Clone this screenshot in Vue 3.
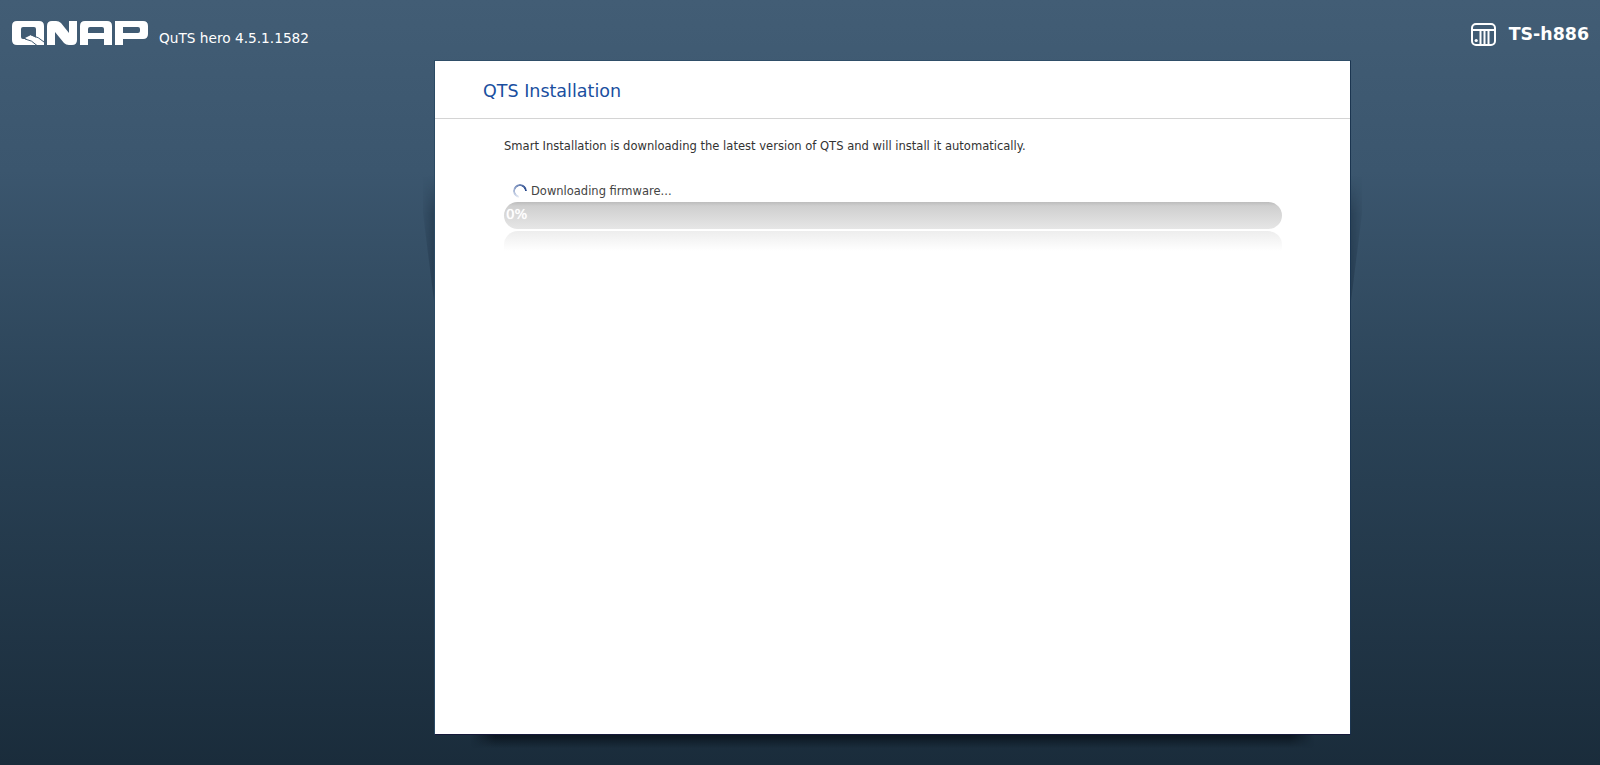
<script setup>
const title = 'QTS Installation'
</script>

<template>
  <div class="page">
    <header class="top">
      <div class="brand">
        <svg class="logo" viewBox="0 0 136 25" width="136" height="25">
          <path fill="#fff" fill-rule="evenodd" d="M5 0H27Q32 0 32 5V19Q32 24 27 24H5Q0 24 0 19V5Q0 0 5 0ZM11 6Q9 6 9 8V16Q9 18 11 18H24V8Q24 6 22 6Z"/>
          <path fill="#fff" d="M13 17L19 14L32 21V24H25Z"/>
          <path fill="none" stroke="#425c73" stroke-width="1" d="M19 14Q27 16 32 21M13 18Q20 19 25 24.5"/>
          <path fill="#fff" d="M35 24V5Q35 0 40 0H44Q47 0 49 2L57 12V0H65V19Q65 24 60 24H57Q54 24 52 22L43 11V24Z"/>
          <path fill="#fff" fill-rule="evenodd" d="M68 24V5Q68 0 73 0H95Q100 0 100 5V24H92V18H76V24ZM76 12H92V8Q92 6 90 6H78Q76 6 76 8Z"/>
          <path fill="#fff" fill-rule="evenodd" d="M103 24V0H131Q136 0 136 5V13Q136 18 131 18H111V24ZM111 12H126Q128 12 128 10V8Q128 6 126 6H111Z"/>
        </svg>
        <span class="version">QuTS hero 4.5.1.1582</span>
      </div>
      <div class="model">
        <svg class="nas" viewBox="0 0 25 23" width="25" height="23">
          <rect x="1" y="1" width="23" height="21" rx="4" fill="none" stroke="#fff" stroke-width="2"/>
          <path d="M1.5 7H23.5" stroke="#fff" stroke-width="2"/>
          <path d="M9.5 7V21M13.5 7V21M17.5 7V21" stroke="#fff" stroke-width="2" fill="none"/>
          <circle cx="5.2" cy="17.5" r="1.6" fill="#fff"/>
        </svg>
        <span class="model-name">TS-h886</span>
      </div>
    </header>

    <main class="panel">
      <i class="ground-shadow"></i>
      <h1 class="title">{{ title }}</h1>
      <div class="body">
        <p class="intro">Smart Installation is downloading the latest version of QTS and will install it automatically.</p>
        <div class="status">
          <i class="spin"></i>
          <span>Downloading firmware...</span>
        </div>
        <div class="bar"><span class="pct">0%</span></div>
        <div class="reflection"></div>
      </div>
    </main>
  </div>
</template>

<style>
html, body { margin: 0; height: 100%; background: #1a2b3a; }
</style>

<style scoped>
.page {
  width: 1600px;
  height: 765px;
  overflow: hidden;
  background: linear-gradient(#425d75 0, #3b566e 170px, #2a4256 420px, #1a2c3b 765px);
  font-family: "DejaVu Sans", Verdana, sans-serif;
}
.top {
  height: 60px;
  display: flex;
  justify-content: space-between;
  align-items: flex-start;
  color: #fff;
}
.brand {
  display: flex;
  align-items: flex-start;
  padding: 21px 0 0 12px;
}
.logo { display: block; }
.version {
  margin: 9px 0 0 11px;
  font-size: 13.7px;
  line-height: 16px;
}
.model {
  display: flex;
  align-items: flex-start;
  padding: 23px 11px 0 0;
}
.nas { display: block; }
.model-name {
  margin: 0 0 0 13px;
  font-size: 17.4px;
  font-weight: 700;
  line-height: 22px;
}
.panel {
  position: relative;
  box-sizing: border-box;
  width: 917px;
  height: 675px;
  margin-left: 434px;
  background: #fff;
  border: 1px solid #2a4a64;
  border-top-color: #2f4e68;
  border-right-color: #1b3550;
  border-bottom-color: #15183a;
}
.panel::before,
.panel::after {
  content: "";
  position: absolute;
  top: 115px;
  width: 11px;
  height: 125px;
  -webkit-mask: linear-gradient(transparent, #000 30%);
  mask: linear-gradient(transparent, #000 30%);
}
.panel::before {
  left: -12px;
  background: linear-gradient(90deg, rgba(12, 28, 44, 0.06), rgba(12, 28, 44, 0.3));
  clip-path: polygon(100% 0, 0 0, 0 30%, 100% 100%);
}
.panel::after {
  right: -12px;
  background: linear-gradient(270deg, rgba(12, 28, 44, 0.06), rgba(12, 28, 44, 0.3));
  clip-path: polygon(0 0, 100% 0, 100% 30%, 0 100%);
}
.ground-shadow {
  position: absolute;
  left: 36px;
  right: 36px;
  top: 100%;
  height: 13px;
  margin-top: 1px;
  background: linear-gradient(rgba(5, 12, 20, 0.7), rgba(5, 12, 20, 0));
  -webkit-mask: linear-gradient(90deg, transparent, #000 24px, #000 calc(100% - 24px), transparent);
  mask: linear-gradient(90deg, transparent, #000 24px, #000 calc(100% - 24px), transparent);
}
.title {
  box-sizing: border-box;
  height: 58px;
  margin: 0;
  padding: 19px 0 0 48px;
  font-size: 17.5px;
  line-height: 22px;
  font-weight: 400;
  color: #1a4fa0;
  border-bottom: 1px solid #d4d4d4;
}
.body { padding: 19px 68px 0 69px; }
.intro {
  margin: 0;
  font-size: 11.55px;
  line-height: 16px;
  color: #333;
}
.status {
  display: flex;
  align-items: center;
  height: 18px;
  margin: 28px 0 0 9px;
  gap: 4px;
  font-size: 11.5px;
  color: #444;
}
.spin {
  display: block;
  width: 14px;
  height: 14px;
  border-radius: 50%;
  background: conic-gradient(from 190deg, rgba(200, 210, 230, 0.4) 0, #9fb0d2 25%, #24468a 72%, rgba(36, 70, 138, 0) 73%);
  -webkit-mask: radial-gradient(circle, transparent 4.6px, #000 5.1px);
  mask: radial-gradient(circle, transparent 4.6px, #000 5.1px);
}
.bar {
  height: 27px;
  margin-top: 2px;
  border-radius: 14px;
  background: linear-gradient(#bcbcbc 0, #cfcfcf 4px, #e6e6e6 100%);
}
.pct {
  display: block;
  padding-left: 2px;
  font-size: 13.5px;
  line-height: 25px;
  color: #fff;
  text-shadow: 0 0 1px #fff;
}
.reflection {
  height: 20px;
  margin-top: 2px;
  border-radius: 14px 14px 0 0;
  background: linear-gradient(#ededed, #fff);
}
</style>
